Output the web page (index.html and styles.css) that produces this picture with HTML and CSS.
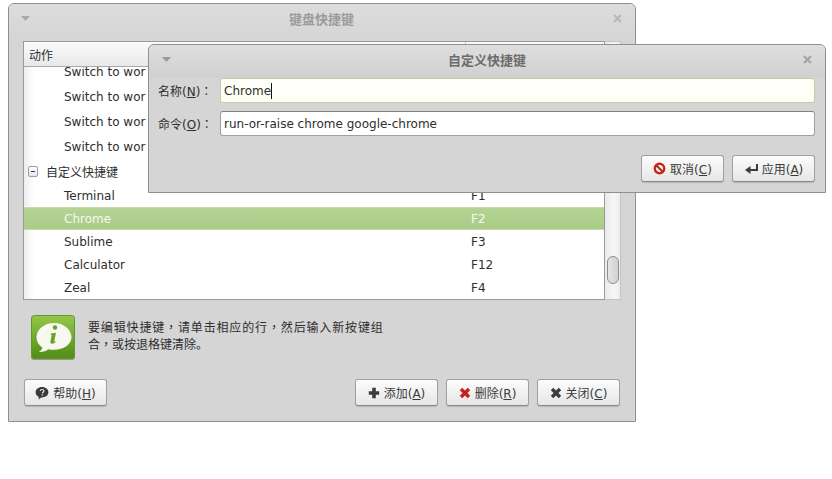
FILE: index.html
```html
<!DOCTYPE html>
<html lang="zh">
<head>
<meta charset="utf-8">
<title>键盘快捷键</title>
<link rel="stylesheet" href="styles.css">
</head>
<body>
<section class="window main-window">
  <header class="titlebar main-titlebar">
    <svg class="menu-arrow" width="9" height="5" viewBox="0 0 9 5"><path d="M0 0h9L4.500 5z"/></svg>
    <h1 class="title">键盘快捷键</h1>
    <svg class="close-x" width="9" height="9" viewBox="0 0 9 9"><path d="M1 1l7 7M8 1L1 8"/></svg>
  </header>
  <div class="tree-wrap">
    <div class="tree">
      <div class="tree-head">
        <div class="head-action">动作</div>
        <div class="head-key"></div>
      </div>
      <div class="tree-body">
        <div class="row row-switch row-first"><span class="name">Switch to wor</span><span class="key"></span></div>
        <div class="row row-switch"><span class="name">Switch to wor</span><span class="key"></span></div>
        <div class="row row-switch"><span class="name">Switch to wor</span><span class="key"></span></div>
        <div class="row row-switch"><span class="name">Switch to wor</span><span class="key"></span></div>
        <div class="row row-group"><span class="expander"></span><span class="group-name">自定义快捷键</span></div>
        <div class="row"><span class="name">Terminal</span><span class="key">F1</span></div>
        <div class="row row-selected"><span class="name">Chrome</span><span class="key">F2</span></div>
        <div class="row"><span class="name">Sublime</span><span class="key">F3</span></div>
        <div class="row"><span class="name">Calculator</span><span class="key">F12</span></div>
        <div class="row"><span class="name">Zeal</span><span class="key">F4</span></div>
      </div>
    </div>
    <div class="scrollbar"><div class="thumb"></div></div>
  </div>
  <div class="info">
    <svg class="info-icon" width="44" height="45" viewBox="0 0 44 45">
      <defs><linearGradient id="ig" x1="0" y1="0" x2="0" y2="1"><stop offset="0" stop-color="#93c748"/><stop offset="1" stop-color="#518c17"/></linearGradient></defs>
      <rect x="0" y="1" width="44" height="44" rx="3" fill="#8d9a80"/>
      <rect x="0.500" y="0.500" width="43" height="43" rx="3" fill="url(#ig)" stroke="#64962c"/>
      <path d="M23 8c-9.700 0-17.500 6.400-17.500 14.300 0 4.300 2.300 8 6 10.400-.6 1.700-2 3.300-3.700 4.300 3.800.2 7-.8 9.700-2.700 1.800.4 3.500.5 5.500.5 9.700 0 17.500-5.500 17.500-12.500C40.500 14.400 32.700 8 23 8z" fill="#f7f9f0"/>
      <circle cx="24" cy="12.500" r="2.200" fill="#6ba126"/>
      <path d="M20 18.500l5-.8-1.700 8.300c0 .8.700.8 2 .1-1.200 1.700-2.500 2.600-4 2.600-1.700 0-2.200-1-1.800-2.400l1.200-6.200-1-.2z" fill="#6ba126"/>
    </svg>
    <p class="info-text"><span class="info-wide">要编辑快捷键<span class="tc" lang="zh-Hant">，</span>请单击相应的行<span class="tc" lang="zh-Hant">，</span>然后输入新按键组</span><br>合<span class="tc" lang="zh-Hant">，</span>或按退格键清除。</p>
  </div>
  <div class="actions">
    <button class="btn">
      <svg width="14" height="14" viewBox="0 0 14 14"><path d="M7 1C3.400 1 .6 3.300.6 6.300c0 2 1.300 3.700 3.200 4.600l-.3 2.500 2.800-2h.7c3.600 0 6.400-2.200 6.400-5.100S10.600 1 7 1z" fill="#3a3a3a"/><path d="M5.200 5c.1-1 .9-1.500 1.900-1.500s1.800.6 1.800 1.500c0 1.200-1.500 1.300-1.500 2.400" fill="none" stroke="#e4e4e4" stroke-width="1.200"/><circle cx="7.300" cy="9" r=".8" fill="#e4e4e4"/></svg>
      <span>帮助(<u>H</u>)</span>
    </button>
    <span class="spacer"></span>
    <button class="btn">
      <svg width="12" height="12" viewBox="0 0 12 12"><path d="M4.200 .8h3.600v3.400h3.400v3.600H7.800v3.400H4.200V7.800H.8V4.200h3.400z" fill="#3c3c3c"/></svg>
      <span>添加(<u>A</u>)</span>
    </button>
    <button class="btn">
      <svg width="12" height="12" viewBox="0 0 12 12"><path d="M.8 3.200l2.400-2.400L6 3.600 8.800.8l2.400 2.400L8.400 6l2.800 2.800-2.400 2.400L6 8.400l-2.800 2.800-2.400-2.400L3.600 6z" fill="#c8201a"/></svg>
      <span>删除(<u>R</u>)</span>
    </button>
    <button class="btn">
      <svg width="12" height="12" viewBox="0 0 12 12"><path d="M.8 3.200l2.400-2.400L6 3.600 8.800.8l2.400 2.400L8.400 6l2.800 2.800-2.400 2.400L6 8.400l-2.800 2.800-2.400-2.400L3.600 6z" fill="#3c3c3c"/></svg>
      <span>关闭(<u>C</u>)</span>
    </button>
  </div>
</section>

<section class="window dialog">
  <header class="titlebar dialog-titlebar">
    <svg class="menu-arrow" width="9" height="5" viewBox="0 0 9 5"><path d="M0 0h9L4.500 5z"/></svg>
    <h2 class="title dialog-title">自定义快捷键</h2>
    <svg class="close-x" width="9" height="9" viewBox="0 0 9 9"><path d="M1 1l7 7M8 1L1 8"/></svg>
  </header>
  <div class="form">
    <label class="field">
      <span class="field-label">名称(<u>N</u>)<span class="tc" lang="zh-Hant">：</span></span>
      <span class="entry entry-focus">Chrome<span class="caret"></span></span>
    </label>
    <label class="field">
      <span class="field-label">命令(<u>O</u>)<span class="tc" lang="zh-Hant">：</span></span>
      <span class="entry">run-or-raise chrome google-chrome</span>
    </label>
  </div>
  <div class="dialog-actions">
    <button class="btn">
      <svg width="13" height="13" viewBox="0 0 13 13"><circle cx="6.500" cy="6.500" r="4.700" fill="#fff" stroke="#c2261c" stroke-width="2.400"/><path d="M3.200 3.200l6.600 6.600" stroke="#c2261c" stroke-width="2.200"/></svg>
      <span>取消(<u>C</u>)</span>
    </button>
    <button class="btn">
      <svg width="14" height="12" viewBox="0 0 14 12"><path d="M13 1v6H6" fill="none" stroke="#3c3c3c" stroke-width="2"/><path d="M6.500 3v8L1 7z" fill="#3c3c3c"/></svg>
      <span>应用(<u>A</u>)</span>
    </button>
  </div>
</section>
</body>
</html>
```

FILE: styles.css
```css
* { box-sizing: border-box; }
html, body { margin: 0; padding: 0; }
body {
  width: 832px;
  height: 479px;
  background: #fff;
  position: relative;
  overflow: hidden;
  font-family: "DejaVu Sans", "Noto Sans CJK SC", sans-serif;
  font-size: 12px;
  color: #2e2e2e;
}
.tc { font-family: "Noto Sans CJK TC", sans-serif; line-height: 0; }
.window {
  position: absolute;
  background: #d5d5d5;
  border: 1px solid #8f8f8f;
  border-radius: 6px 6px 0 0;
  display: flex;
  flex-direction: column;
}
.main-window { left: 8px; top: 3px; width: 628px; height: 419px; }
.dialog { left: 148px; top: 44px; width: 678px; height: 149px; }
.titlebar {
  display: flex;
  align-items: center;
  flex: none;
  border-radius: 5px 5px 0 0;
}
.main-titlebar {
  height: 37px;
  background: linear-gradient(#dcdcdc, #d5d5d5);
  padding: 0 13px 9px 12px;
}
.main-titlebar .close-x { stroke: #b8b8b8; }
.dialog-titlebar {
  height: 33px;
  background: linear-gradient(#dedede, #d0d0d0);
  padding: 0 13px 5px 13px;
}
.menu-arrow { fill: #a9a9a9; flex: none; }
.dialog-titlebar .menu-arrow { fill: #9a9a9a; }
.close-x { flex: none; fill: none; stroke: #a4a4a4; stroke-width: 2.200; }
.title {
  flex: 1;
  margin: 0;
  text-align: center;
  font-size: 13px;
  font-weight: 700;
  color: #9b9b9b;
}
.dialog-title { color: #6c6c6c; }
.tree-wrap {
  display: flex;
  height: 259px;
  margin: 0 14px;
  flex: none;
}
.tree {
  flex: 1;
  min-width: 0;
  background: #fff;
  border: 1px solid #9a9a9a;
  display: flex;
  flex-direction: column;
  overflow: hidden;
}
.tree-head {
  display: flex;
  height: 25px;
  flex: none;
  background: linear-gradient(#fbfbfb, #e8e8e8);
  border-bottom: 1px solid #a8a8a8;
  line-height: 28px;
}
.head-action { width: 442px; padding-left: 5px; border-right: 1px solid #c4c4c4; }
.head-key { flex: 1; }
.tree-body { flex: 1; overflow: hidden; background: linear-gradient(90deg, #eeeeee, #fff 10px); }
.row { display: flex; align-items: center; height: 23px; }
.row-switch { height: 25px; }
.row-first { margin-top: -8px; }
.row-group { height: 25px; }
.name { width: 447px; padding-left: 40px; white-space: nowrap; overflow: hidden; flex: none; }
.key { flex: 1; }
.row-selected {
  background: linear-gradient(#b4d394, #a9cc87);
  color: #f4f8ee;
  border-top: 1px solid #c4dcaa;
  border-bottom: 1px solid #c4dcaa;
}
.expander {
  width: 10px;
  height: 11px;
  margin-left: 4px;
  border: 1px solid #9d9d9d;
  border-radius: 2px;
  background: linear-gradient(#fff, #e6e6e6);
  position: relative;
  flex: none;
}
.expander::after {
  content: "";
  position: absolute;
  left: 2px;
  top: 4px;
  width: 4px;
  height: 1px;
  background: #333;
}
.group-name { margin-left: 8px; }
.scrollbar {
  width: 16px;
  flex: none;
  background: linear-gradient(90deg, #eaeaea, #f6f6f6 60%, #ededed);
  border: 1px solid #c4c4c4;
  border-left: 0;
  display: flex;
  flex-direction: column;
  justify-content: flex-end;
  align-items: center;
  padding-bottom: 15px;
}
.thumb {
  width: 12px;
  height: 28px;
  border: 1px solid #8e8e8e;
  border-radius: 6px;
  background: linear-gradient(90deg, #e4e4e4, #d2d2d2);
}
.info {
  display: flex;
  align-items: flex-start;
  height: 79px;
  flex: none;
  padding: 15px 0 0 22px;
}
.info-icon { flex: none; }
.info-text {
  margin: 5px 0 0 13px;
  line-height: 17px;
  font-size: 12px;
  color: #2e2e2e;
}
.info-wide { letter-spacing: .85px; }
.actions {
  display: flex;
  gap: 8px;
  padding: 0 15px;
}
.spacer { flex: 1; }
.btn {
  width: 83px;
  height: 27px;
  padding: 0;
  display: flex;
  align-items: center;
  justify-content: center;
  gap: 4px;
  font: inherit;
  color: #3a3a3a;
  border: 1px solid #a2a2a2;
  border-bottom-color: #8a8a8a;
  border-radius: 3px;
  background: linear-gradient(#fcfcfc, #e6e6e6);
  box-shadow: 0 1px 1px rgba(0,0,0,.15);
}
.form {
  display: flex;
  flex-direction: column;
  gap: 8px;
  padding: 0 10px 0 9px;
}
.field { display: flex; align-items: center; }
.field-label { width: 62px; flex: none; }
.entry {
  flex: 1;
  height: 25px;
  padding-left: 3px;
  display: flex;
  align-items: center;
  background: #fff;
  border: 1px solid #a0a0a0;
  border-top-color: #808080;
  border-radius: 3px;
  color: #2e2e2e;
}
.entry-focus { background: #fefff6; border-color: #c0cfa0; }
.caret { width: 1px; height: 16px; background: #111; }
.dialog-actions {
  display: flex;
  justify-content: flex-end;
  gap: 8px;
  padding: 19px 10px 0 0;
}
```
